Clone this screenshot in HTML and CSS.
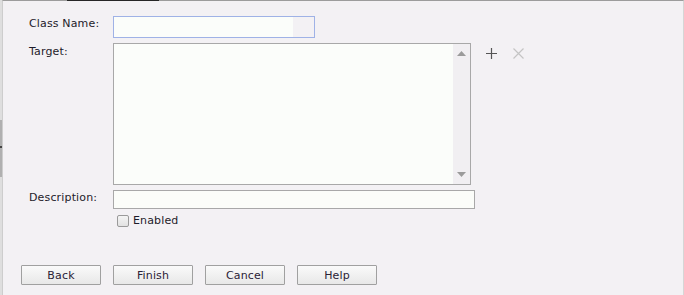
FILE: index.html
```html
<!DOCTYPE html>
<html>
<head>
<meta charset="utf-8">
<link rel="stylesheet" href="styles.css">
</head>
<body>
<div class="frame">
  <div class="tab-indicator"></div>
  <div class="splitter"><span class="tick"></span></div>
  <div class="form">
    <div class="row row-name">
      <label class="label">Class Name:</label>
      <div class="input name-input"><span class="field"></span></div>
    </div>
    <div class="row row-target">
      <label class="label">Target:</label>
      <div class="listbox">
        <div class="list"></div>
        <div class="scroll">
          <svg width="9" height="5" viewBox="0 0 9 5"><path d="M0 5 L4.5 0 L9 5 Z" fill="#9b9b9b"/></svg>
          <svg width="9" height="5" viewBox="0 0 9 5"><path d="M0 0 L4.5 5 L9 0 Z" fill="#9b9b9b"/></svg>
        </div>
      </div>
      <div class="tools">
        <svg class="tool" width="11" height="11" viewBox="0 0 11 11"><path d="M5.5 0 V11 M0 5.5 H11" stroke="#555" stroke-width="1.2"/></svg>
        <svg class="tool" width="11" height="11" viewBox="0 0 11 11"><path d="M0.5 0.5 L10.5 10.5 M10.5 0.5 L0.5 10.5" stroke="#c4c4c4" stroke-width="1.2"/></svg>
      </div>
    </div>
    <div class="row row-desc">
      <label class="label">Description:</label>
      <div class="input desc-input"></div>
    </div>
    <div class="row row-check">
      <span class="check-spacer"></span>
      <span class="checkbox"></span>
      <span class="check-text">Enabled</span>
    </div>
  </div>
  <div class="buttons">
    <button class="btn">Back</button>
    <button class="btn">Finish</button>
    <button class="btn">Cancel</button>
    <button class="btn">Help</button>
  </div>
</div>
</body>
</html>
```
FILE: styles.css
```css
html, body {
  margin: 0;
  padding: 0;
  background: #dedede;
  height: 295px;
  overflow: hidden;
}
body {
  font-family: "DejaVu Sans", Verdana, sans-serif;
  font-size: 11px;
  color: #1e1b2a;
}
.frame {
  position: relative;
  margin-left: 2px;
  height: 294px;
  border-top: 1px solid #9c9c9c;
  border-left: 1px solid #cdcdcd;
  border-right: 1px solid #d6d6d6;
  background: #f3f1f4;
  box-sizing: content-box;
  width: 680px;
}
.tab-indicator {
  position: absolute;
  top: -1px;
  left: 64px;
  width: 92px;
  height: 1px;
  background: #262626;
}
.splitter {
  position: absolute;
  left: -3px;
  top: 119px;
  width: 2px;
  height: 57px;
  background: #b0b0b0;
}
.splitter .tick {
  position: absolute;
  left: 0;
  top: 26px;
  width: 2px;
  height: 2px;
  background: #444;
}
.form {
  padding: 15px 0 0 26px;
}
.row {
  display: flex;
  align-items: flex-start;
}
.label {
  width: 84px;
  flex: none;
  line-height: 13px;
  padding-top: 1px;
  letter-spacing: 0.15px;
}
.input {
  box-sizing: border-box;
  background: #fbfdf9;
  border: 1px solid #a8a8a8;
}
.name-input {
  width: 202px;
  height: 22px;
  border-color: #9fb2e6;
  background: #f3f1f4;
}
.name-input .field {
  display: block;
  width: 179px;
  height: 20px;
  background: #fbfdfa;
}
.row-target {
  margin-top: 5px;
}
.row-target .label {
  padding-top: 2px;
}
.listbox {
  box-sizing: border-box;
  width: 358px;
  height: 142px;
  border: 1px solid #a8a8a8;
  display: flex;
}
.list {
  flex: 1;
  background: #fbfdfa;
}
.scroll {
  width: 17px;
  background: #f1eff2;
  display: flex;
  flex-direction: column;
  justify-content: space-between;
  align-items: center;
  padding: 7px 0 7px 0;
}
.scroll svg {
  display: block;
}
.tools {
  display: flex;
  gap: 16px;
  margin-left: 15px;
  margin-top: 5px;
}
.tool {
  display: block;
}
.row-desc {
  margin-top: 5px;
}
.desc-input {
  width: 362px;
  height: 19px;
}
.row-check {
  margin-top: 5px;
  align-items: center;
}
.check-spacer {
  width: 88px;
  flex: none;
}
.checkbox {
  box-sizing: border-box;
  width: 12px;
  height: 12px;
  border: 1px solid #9a9a9a;
  border-radius: 2px;
  background: linear-gradient(#f4f4f4, #e2e2e2);
}
.check-text {
  margin-left: 4px;
  line-height: 13px;
  letter-spacing: 0.15px;
}
.buttons {
  display: flex;
  gap: 12px;
  margin: 38px 0 0 18px;
}
.btn {
  box-sizing: border-box;
  width: 80px;
  height: 20px;
  margin: 0;
  padding: 0;
  border: 1px solid #a0a0a0;
  border-radius: 1px;
  background: linear-gradient(#fafafa, #e8e8e8);
  font-family: "DejaVu Sans", Verdana, sans-serif;
  font-size: 11px;
  letter-spacing: 0.15px;
  color: #2a2236;
  line-height: 17px;
}
```
